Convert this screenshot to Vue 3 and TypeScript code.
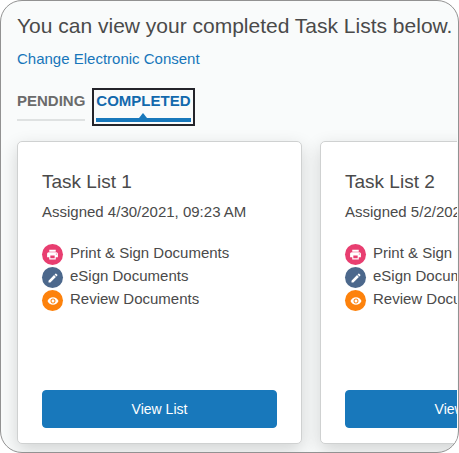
<script setup lang="ts">
import { ref } from 'vue'

type Tab = 'pending' | 'completed'
type Kind = 'print' | 'esign' | 'review'

interface TaskList {
  id: number
  title: string
  assigned: string
}

const tabs: { id: Tab; label: string }[] = [
  { id: 'pending', label: 'PENDING' },
  { id: 'completed', label: 'COMPLETED' },
]
const active = ref<Tab>('completed')

const steps: { kind: Kind; label: string }[] = [
  { kind: 'print', label: 'Print & Sign Documents' },
  { kind: 'esign', label: 'eSign Documents' },
  { kind: 'review', label: 'Review Documents' },
]

const icons: Record<Kind, string> = {
  print:
    'M19 8H5c-1.66 0-3 1.34-3 3v6h4v4h12v-4h4v-6c0-1.66-1.34-3-3-3zm-3 11H8v-5h8v5zm3-7c-.55 0-1-.45-1-1s.45-1 1-1 1 .45 1 1-.45 1-1 1zm-1-9H6v4h12V3z',
  esign:
    'M3 17.25V21h3.75L17.81 9.94l-3.75-3.75L3 17.25zM20.71 7.04c.39-.39.39-1.02 0-1.41l-2.34-2.34c-.39-.39-1.02-.39-1.41 0l-1.83 1.83 3.75 3.75 1.83-1.83z',
  review:
    'M12 4.5C7 4.5 2.73 7.61 1 12c1.73 4.39 6 7.5 11 7.5s9.27-3.11 11-7.5c-1.73-4.39-6-7.5-11-7.5zM12 17c-2.76 0-5-2.24-5-5s2.24-5 5-5 5 2.24 5 5-2.24 5-5 5zm0-8c-1.66 0-3 1.34-3 3s1.34 3 3 3 3-1.34 3-3-1.34-3-3-3z',
}

const lists: TaskList[] = [
  { id: 1, title: 'Task List 1', assigned: 'Assigned 4/30/2021, 09:23 AM' },
  { id: 2, title: 'Task List 2', assigned: 'Assigned 5/2/2021, 09:23 AM' },
]
</script>

<template>
  <main class="panel">
    <h1 class="heading">You can view your completed Task Lists below.</h1>
    <a class="consent" href="#consent">Change Electronic Consent</a>

    <div class="tabs" role="tablist">
      <button
        v-for="tab in tabs"
        :key="tab.id"
        type="button"
        role="tab"
        class="tab"
        :class="{ active: active === tab.id }"
        :aria-selected="active === tab.id"
        @click="active = tab.id"
      >
        <span class="tab-label">{{ tab.label }}</span>
      </button>
    </div>

    <div class="cards">
      <article v-for="list in lists" :key="list.id" class="card">
        <h2 class="title">{{ list.title }}</h2>
        <p class="assigned">{{ list.assigned }}</p>
        <ul class="steps">
          <li v-for="step in steps" :key="step.kind" class="step">
            <span class="badge" :class="step.kind">
              <svg viewBox="0 0 24 24" aria-hidden="true"><path :d="icons[step.kind]" /></svg>
            </span>
            <span class="step-label">{{ step.label }}</span>
          </li>
        </ul>
        <button type="button" class="view">View List</button>
      </article>
    </div>
  </main>
</template>

<style>
body {
  background: #fff;
}
</style>

<style scoped>
.panel {
  box-sizing: border-box;
  min-height: 100vh;
  display: flex;
  flex-direction: column;
  align-items: flex-start;
  padding: 11px 1px 0 0;
  border: 1px solid #929292;
  border-radius: 22px;
  background: #f9fbfb;
  color: #4a4a4a;
  font-family: "Liberation Sans", Arial, sans-serif;
  font-size: 15px;
  overflow: hidden;
}

.heading {
  margin: 0 0 8px;
  padding-left: 16px;
  font-size: 21px;
  font-weight: 400;
  line-height: 28px;
  white-space: nowrap;
}

.consent {
  margin-left: 16px;
  color: #1776ba;
  line-height: 22px;
  text-decoration: none;
}

.tabs {
  display: flex;
  align-items: flex-start;
  gap: 3px;
  margin-top: 18px;
  padding-left: 12px;
}

.tab {
  position: relative;
  padding: 2px;
  border: 2px solid transparent;
  background: none;
  color: #6b6b6b;
  font: inherit;
  font-weight: 700;
  line-height: 18px;
  cursor: pointer;
}

.tab-label {
  display: block;
  padding-bottom: 9px;
  border-bottom: 2px solid #dfe2e2;
}

.tab.active {
  border-color: #24242a;
  color: #1269ad;
}

.tab.active .tab-label {
  padding-bottom: 8px;
  border-bottom: 4px solid #1878bb;
}

.tab.active::after {
  content: "";
  position: absolute;
  bottom: 6px;
  left: 50%;
  margin-left: -4px;
  border: 4px solid transparent;
  border-top: 0;
  border-bottom: 5px solid #1878bb;
}

.cards {
  box-sizing: border-box;
  flex: 1;
  width: 100%;
  display: flex;
  gap: 18px;
  padding: 15px 0 8px 16px;
  overflow: hidden;
}

.card {
  box-sizing: border-box;
  flex: 0 0 285px;
  display: flex;
  flex-direction: column;
  padding: 24px 24px 15px;
  border: 1px solid #cfd1d1;
  border-radius: 5px;
  background: #fff;
  box-shadow: 0 6px 18px rgba(0, 0, 0, 0.16);
}

.title {
  margin: 4px 0 7px;
  font-size: 19px;
  font-weight: 400;
  line-height: 24px;
}

.assigned {
  margin: 0 0 19px;
  line-height: 22px;
}

.steps {
  margin: 0 0 60px;
  padding: 0;
  list-style: none;
}

.step {
  display: flex;
  align-items: flex-end;
  gap: 7px;
  height: 23px;
}

.step-label {
  align-self: flex-start;
  line-height: 22px;
}

.badge {
  display: flex;
  align-items: center;
  justify-content: center;
  width: 21px;
  height: 21px;
  border-radius: 50%;
}

.badge svg {
  width: 13px;
  height: 13px;
  fill: #fff;
}

.badge.esign svg,
.badge.review svg {
  width: 12px;
  height: 12px;
}

.print {
  background: #e83e70;
}

.esign {
  background: #4c688c;
}

.review {
  background: #fd820c;
}

.view {
  height: 38px;
  margin-top: auto;
  border: 1px solid #1878bb;
  border-radius: 4px;
  background: #1878bb;
  color: #fff;
  font: inherit;
  font-size: 14px;
  cursor: pointer;
}
</style>
